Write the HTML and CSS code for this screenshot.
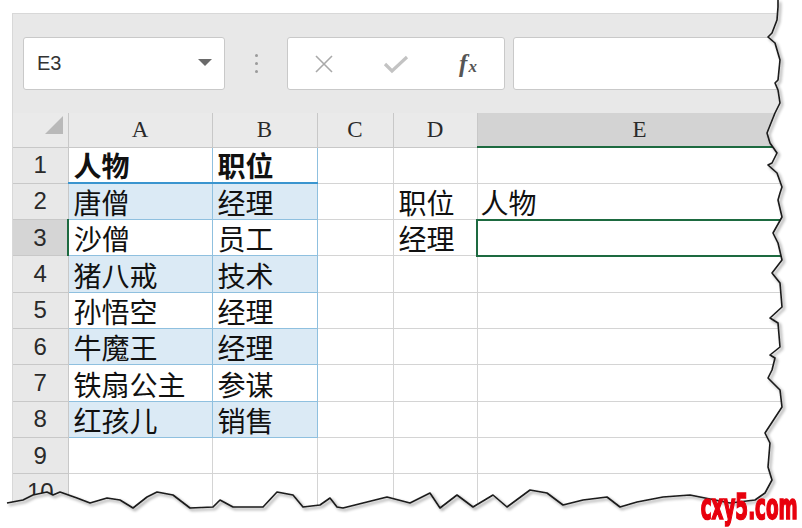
FILE: index.html
```html
<!DOCTYPE html>
<html>
  <head>
    <meta charset="utf-8">
    <title>E3</title>
    <link rel="stylesheet" href="styles.css">
  </head>
  <body>
    <div class="page">
      <div class="sheet">
        <div class="toolbar">
          <div class="name-box">
            <span>E3</span>
            <span class="caret"></span>
          </div>
          <div class="grip"><i></i><i></i><i></i></div>
          <div class="fx-buttons">
            <span class="btn">
              <svg width="20" height="20" viewBox="0 0 20 20"><path d="M2 2 L18 18 M18 2 L2 18" stroke="#a9a9a9" stroke-width="1.6" fill="none"/></svg>
            </span>
            <span class="btn">
              <svg width="26" height="20" viewBox="0 0 26 20"><path d="M2 10 L9 17 L24 3" stroke="#c3c3c3" stroke-width="3.2" fill="none"/></svg>
            </span>
            <span class="btn fx">f<span class="fx-x">x</span></span>
          </div>
          <div class="formula-input"></div>
        </div>

        <table class="grid">
          <colgroup>
            <col style="width:55px">
            <col style="width:144px">
            <col style="width:105px">
            <col style="width:76px">
            <col style="width:84px">
            <col>
          </colgroup>
          <thead>
            <tr>
              <th class="corner"><span class="tri"></span></th>
              <th>A</th>
              <th>B</th>
              <th>C</th>
              <th>D</th>
              <th class="sel-col">E</th>
            </tr>
          </thead>
          <tbody>
            <tr>
              <th>1</th>
              <td class="t head">人物</td>
              <td class="t head">职位</td>
              <td></td><td></td><td></td>
            </tr>
            <tr>
              <th>2</th>
              <td class="t band">唐僧</td>
              <td class="t band">经理</td>
              <td></td><td>职位</td><td class="e2">人物</td>
            </tr>
            <tr>
              <th class="sel-row">3</th>
              <td class="t">沙僧</td>
              <td class="t">员工</td>
              <td></td><td>经理</td><td class="active"></td>
            </tr>
            <tr>
              <th>4</th>
              <td class="t band">猪八戒</td>
              <td class="t band">技术</td>
              <td></td><td></td><td></td>
            </tr>
            <tr>
              <th>5</th>
              <td class="t">孙悟空</td>
              <td class="t">经理</td>
              <td></td><td></td><td></td>
            </tr>
            <tr>
              <th>6</th>
              <td class="t band">牛魔王</td>
              <td class="t band">经理</td>
              <td></td><td></td><td></td>
            </tr>
            <tr>
              <th>7</th>
              <td class="t">铁扇公主</td>
              <td class="t">参谋</td>
              <td></td><td></td><td></td>
            </tr>
            <tr>
              <th>8</th>
              <td class="t band">红孩儿</td>
              <td class="t band">销售</td>
              <td></td><td></td><td></td>
            </tr>
            <tr>
              <th>9</th>
              <td></td><td></td><td></td><td></td><td></td>
            </tr>
            <tr>
              <th>10</th>
              <td></td><td></td><td></td><td></td><td></td>
            </tr>
          </tbody>
        </table>
      </div>

      <!-- torn paper edge over the right and bottom of the sheet -->
      <svg class="tear" width="802" height="528" viewBox="0 0 802 528">
        <defs>
          <filter id="shadow" x="-10%" y="-10%" width="120%" height="120%">
            <feDropShadow dx="2" dy="2" stdDeviation="1.6" flood-color="#000" flood-opacity="0.45"/>
          </filter>
        </defs>
        <path fill="#fff" d="M778,0 L778,7 L777,20 L772,33 L768,37 L775,43 L780,60 L778,80 L775,83 L778,90 L780,103 L775,113 L767,133 L770,143 L777,153 L772,163 L768,165 L777,173 L782,187 L780,193 L778,200 L782,217 L773,233 L778,243 L782,260 L772,273 L780,283 L782,307 L770,318 L778,323 L780,347 L770,355 L775,358 L772,370 L768,378 L780,390 L782,407 L765,433 L770,443 L768,467 L772,480 L765,493 L755,500 L730,503 L690,495 L663,497 L637,502 L620,507 L607,497 L583,500 L563,505 L547,493 L530,490 L507,507 L493,495 L473,507 L457,495 L440,508 L430,493 L410,503 L387,497 L363,503 L343,508 L337,507 L330,498 L320,505 L303,507 L293,495 L277,492 L263,507 L233,507 L220,500 L213,507 L190,508 L173,495 L157,492 L147,497 L133,508 L120,500 L107,498 L90,503 L77,498 L60,492 L53,495 L47,492 L33,495 L23,500 L7,503 L0,504 L0,528 L802,528 L802,0 Z"/>
        <path fill="none" stroke="#1a1a1a" stroke-width="1.6" stroke-linejoin="round" filter="url(#shadow)" d="M778,0 L778,7 L777,20 L772,33 L768,37 L775,43 L780,60 L778,80 L775,83 L778,90 L780,103 L775,113 L767,133 L770,143 L777,153 L772,163 L768,165 L777,173 L782,187 L780,193 L778,200 L782,217 L773,233 L778,243 L782,260 L772,273 L780,283 L782,307 L770,318 L778,323 L780,347 L770,355 L775,358 L772,370 L768,378 L780,390 L782,407 L765,433 L770,443 L768,467 L772,480 L765,493 L755,500 L730,503 L690,495 L663,497 L637,502 L620,507 L607,497 L583,500 L563,505 L547,493 L530,490 L507,507 L493,495 L473,507 L457,495 L440,508 L430,493 L410,503 L387,497 L363,503 L343,508 L337,507 L330,498 L320,505 L303,507 L293,495 L277,492 L263,507 L233,507 L220,500 L213,507 L190,508 L173,495 L157,492 L147,497 L133,508 L120,500 L107,498 L90,503 L77,498 L60,492 L53,495 L47,492 L33,495 L23,500 L7,503"/>
      </svg>

      <div class="watermark">cxy5.com</div>
    </div>
  </body>
</html>
```

FILE: styles.css
```css
* {
  box-sizing: border-box;
}

body {
  margin: 0;
  background-color: #fff;
  font-family: "Liberation Sans", Arial, sans-serif;
}

.page {
  position: relative;
  width: 802px;
  height: 528px;
  overflow: hidden;
  padding: 13px 0 0 12px;
}

.sheet {
  height: 515px;
  background-color: #fff;
  border-left: 1px solid #d8d8d8;
  border-top: 1px solid #d8d8d8;
}

/* formula bar */
.toolbar {
  display: flex;
  align-items: flex-start;
  height: 99px;
  padding: 23px 0 0 10px;
  background-color: #e8e8e8;
}

.name-box {
  display: flex;
  align-items: center;
  justify-content: space-between;
  width: 202px;
  height: 53px;
  padding: 0 12px 0 13px;
  background-color: #fff;
  border: 1px solid #c9c9c9;
  border-radius: 3px;
  font-size: 20px;
  color: #333;
}

.caret {
  width: 0;
  height: 0;
  margin-top: -2px;
  border-left: 7px solid transparent;
  border-right: 7px solid transparent;
  border-top: 7px solid #6a6a6a;
}

.grip {
  display: flex;
  flex-direction: column;
  align-items: center;
  gap: 5px;
  width: 62px;
  padding-top: 17px;
}

.grip i {
  width: 3px;
  height: 3px;
  border-radius: 50%;
  background-color: #9a9a9a;
}

.fx-buttons {
  display: flex;
  align-items: center;
  width: 218px;
  height: 53px;
  background-color: #fff;
  border: 1px solid #c9c9c9;
  border-radius: 3px;
}

.btn {
  display: flex;
  justify-content: center;
  align-items: baseline;
  width: 72px;
}

.fx {
  font-family: "Liberation Serif", serif;
  font-style: italic;
  font-weight: bold;
  font-size: 25px;
  color: #555;
}

.fx-x {
  font-size: 17px;
  margin-left: 1px;
}

.formula-input {
  flex: 1;
  height: 53px;
  margin-left: 8px;
  background-color: #fff;
  border: 1px solid #c9c9c9;
  border-radius: 3px;
}

/* cells */
.grid {
  border-collapse: collapse;
  table-layout: fixed;
  width: 790px;
}

.grid th,
.grid td {
  height: 36.3px;
  padding: 0;
  border: 1px solid #d4d4d4;
}

.grid thead th {
  height: 34px;
  border-top: none;
  border-color: #c8c8c8;
  background-color: #eaeaea;
  font-family: "Liberation Serif", serif;
  font-size: 23px;
  font-weight: normal;
  color: #2a2a2a;
}

.grid thead th.corner {
  border-left: none;
  text-align: right;
  vertical-align: bottom;
}

.tri {
  display: inline-block;
  width: 0;
  height: 0;
  margin: 0 5px 7px 0;
  border-left: 18px solid transparent;
  border-bottom: 18px solid #b9b9b9;
}

.grid thead th.sel-col {
  background-color: #d3d3d3;
  border-bottom: 2px solid #1d6a40;
}

.grid tbody th {
  border-left: none;
  border-color: #c8c8c8;
  background-color: #e8e8e8;
  font-size: 24px;
  font-weight: normal;
  color: #2a2a2a;
}

.grid tbody th.sel-row {
  background-color: #d5d5d5;
  border-right: 2px solid #1d6a40;
}

.grid td {
  padding: 0 5px;
  vertical-align: bottom;
  white-space: nowrap;
  font-family: "Noto Sans CJK SC", "Noto Sans", sans-serif;
  font-size: 28px;
  line-height: 34px;
  color: #111;
}

.grid td.t {
  border-color: #8fc0df;
}

.grid td.head {
  font-weight: bold;
  border-bottom: 2px solid #3a95cf;
}

.grid td.band {
  background-color: #dbeaf5;
}

.grid td.e2 {
  padding-left: 3px;
}

.grid td.active {
  border: 2px solid #1d6a40;
}

/* overlays */
.tear {
  position: absolute;
  top: 0;
  left: 0;
}

.watermark {
  position: absolute;
  right: 4px;
  bottom: 4px;
  font-family: "DejaVu Sans Condensed", "DejaVu Sans", sans-serif;
  font-weight: 900;
  font-size: 34px;
  line-height: 1;
  color: #e8000d;
  -webkit-text-stroke: 1.6px #e8000d;
  transform: scale(0.6, 1.05);
  transform-origin: right bottom;
}
```
